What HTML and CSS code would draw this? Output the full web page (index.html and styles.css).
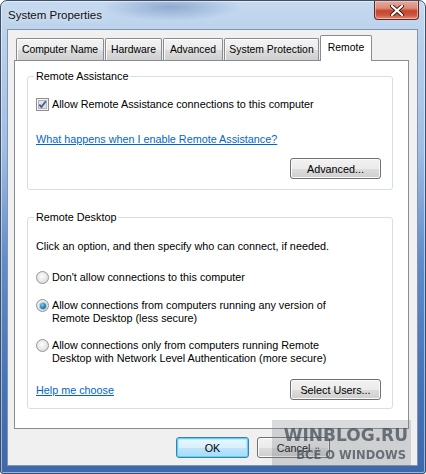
FILE: index.html
```html
<!DOCTYPE html>
<html lang="en">
<head>
  <meta charset="UTF-8" />
  <title>System Properties</title>
  <link rel="stylesheet" href="styles.css">
</head>
<body>
  <div class="window">
    <div class="titlebar">
      <span class="title">System Properties</span>
      <div class="close">
        <svg width="14" height="11" viewBox="0 0 14 11">
          <path d="M2 1 L12 10 M12 1 L2 10" stroke="#3a1a14" stroke-width="4" stroke-linecap="round" />
          <path d="M2 1 L12 10 M12 1 L2 10" stroke="#fff" stroke-width="2.2" stroke-linecap="round" />
        </svg>
      </div>
    </div>

    <div class="client">
      <div class="tabs">
        <div class="tab t1">Computer Name</div>
        <div class="tab t2">Hardware</div>
        <div class="tab t3">Advanced</div>
        <div class="tab t4">System Protection</div>
        <div class="tab t5 active">Remote</div>
      </div>

      <div class="panel">
        <fieldset class="group ra">
          <legend>Remote Assistance</legend>
          <div class="option single">
            <span class="checkbox">
              <svg width="13" height="13" viewBox="0 0 13 13">
                <rect x="0.5" y="0.5" width="12" height="12" fill="#f4f4f4" stroke="#8f8f8f" />
                <rect x="2.5" y="2.5" width="8" height="8" fill="#dfe3e8" stroke="#b4b8be" />
                <path d="M3.3 6.6 L5.4 9 L9.8 3.2" fill="none" stroke="#4b5b8f" stroke-width="1.8" />
              </svg>
            </span>
            <span>Allow Remote Assistance connections to this computer</span>
          </div>
          <a class="link ra-link" href="#">What happens when I enable Remote Assistance?</a>
          <div class="row end">
            <button class="btn wide">Advanced...</button>
          </div>
        </fieldset>

        <fieldset class="group rd">
          <legend>Remote Desktop</legend>
          <p class="intro">Click an option, and then specify who can connect, if needed.</p>
          <div class="option r1">
            <span class="radio"></span>
            <span>Don't allow connections to this computer</span>
          </div>
          <div class="option r2">
            <span class="radio on"></span>
            <span>Allow connections from computers running any version of<br>Remote Desktop (less secure)</span>
          </div>
          <div class="option r3">
            <span class="radio"></span>
            <span>Allow connections only from computers running Remote<br>Desktop with Network Level Authentication (more secure)</span>
          </div>
          <div class="row between">
            <a class="link" href="#">Help me choose</a>
            <button class="btn wide">Select Users...</button>
          </div>
        </fieldset>
      </div>

      <div class="actions">
        <button class="btn default">OK</button>
        <button class="btn">Cancel</button>
      </div>
    </div>

    <div class="watermark">
      <div class="wm-big">WINBLOG.RU</div>
      <div class="wm-small">ВСЁ О WINDOWS</div>
    </div>
  </div>
</body>
</html>
```

FILE: styles.css
```css
body {
  margin: 0;
  width: 426px;
  height: 474px;
  overflow: hidden;
  font-family: "Liberation Sans", Arial, sans-serif;
  font-size: 10.8px;
  color: #000;
}
.window {
  position: relative;
  width: 426px;
  height: 474px;
  box-sizing: border-box;
  display: flex;
  flex-direction: column;
  border-radius: 7px 7px 3px 3px;
  border: 1px solid #3c4e6a;
  background:
    radial-gradient(ellipse 70px 14px at 170px 6px, rgba(80,115,170,0.45), rgba(80,115,170,0)),
    linear-gradient(180deg, #c6daf0 0, #b9d0ea 40px, #9fbde3 150px, #5f8cca 260px, #4674b8 380px, #3d68ab 474px);
  box-shadow: inset 0 0 0 1px rgba(255,255,255,0.5);
}
.titlebar {
  height: 28px;
  display: flex;
  justify-content: space-between;
  align-items: flex-start;
}
.title {
  margin: 8px 0 0 7px;
  font-size: 11.5px;
  color: #111;
  text-shadow: 0 0 6px rgba(255,255,255,0.8);
}
.close {
  width: 45px;
  height: 19px;
  margin-right: 6px;
  box-sizing: border-box;
  border: 1px solid #5c2a22;
  border-top: none;
  border-radius: 0 0 4px 4px;
  display: flex;
  align-items: center;
  justify-content: center;
  background: linear-gradient(180deg, #e9a99b 0, #dc8a78 40%, #c5432e 55%, #cf5a3f 80%, #e0907b 100%);
  box-shadow: inset 0 0 0 1px rgba(255,210,200,0.6);
}
.client {
  margin: 0 7px 0 6px;
  height: 437px;
  box-sizing: border-box;
  border: 1px solid #8294b0;
  background: #f0f0f0;
  padding: 0 8px 0 6px;
}
.tabs {
  height: 30px;
  display: flex;
  align-items: flex-end;
  padding-left: 2px;
}
.tab {
  height: 22px;
  box-sizing: border-box;
  border: 1px solid #898c95;
  border-bottom: none;
  border-radius: 2px 2px 0 0;
  margin-right: 1px;
  display: flex;
  align-items: center;
  justify-content: center;
  white-space: nowrap;
  font-size: 10.4px;
  background: linear-gradient(180deg, #f3f3f3 0, #ebebeb 50%, #dddddd 51%, #cfcfcf 100%);
  box-shadow: inset 0 1px 0 #fff, inset 1px 0 0 #fafafa;
}
.t1 { width: 88px; }
.t2 { width: 57px; }
.t3 { width: 60px; }
.t4 { width: 95px; }
.t5 { width: 52px; }
.tab.active {
  height: 26px;
  margin-bottom: -1px;
  padding-bottom: 3px;
  background: #fff;
  box-shadow: none;
  position: relative;
  z-index: 1;
}
.panel {
  height: 369px;
  box-sizing: border-box;
  border: 1px solid #898c95;
  background: #fff;
  padding: 8px 15px 0 12px;
}
.group {
  margin: 0;
  padding: 0 11px 0 8px;
  border: 1px solid #d5dfe5;
  border-radius: 3px;
}
.group legend {
  padding: 0 2px;
  margin-left: -2px;
  line-height: 14px;
}
.ra { padding-bottom: 10px; }
.rd { margin-top: 20px; padding-bottom: 8px; }
.option {
  display: flex;
  align-items: flex-start;
  gap: 3px;
  line-height: 13px;
}
.option.single { margin-top: 14px; line-height: 14px; }
.checkbox { height: 13px; margin-top: 1px; }
.checkbox svg { display: block; }
.link {
  display: inline-block;
  color: #0066cc;
  text-decoration: underline;
  line-height: 14px;
}
.ra-link { margin-top: 21px; }
.row {
  display: flex;
  align-items: center;
}
.row.end { justify-content: flex-end; margin-top: 12px; }
.row.between { justify-content: space-between; margin-top: 14px; }
.intro {
  margin: 15px 0 0;
  line-height: 14px;
}
.r1 { margin-top: 18px; }
.r2 { margin-top: 15px; }
.r3 { margin-top: 14px; }
.radio {
  width: 13px;
  height: 13px;
  flex: none;
  box-sizing: border-box;
  border-radius: 50%;
  border: 1px solid #959595;
  background: radial-gradient(circle at 45% 40%, #fdfdfd 0, #e6e6e6 55%, #cfcfcf 100%);
  display: flex;
  align-items: center;
  justify-content: center;
}
.radio.on::after {
  content: "";
  width: 6px;
  height: 6px;
  border-radius: 50%;
  background: radial-gradient(circle at 40% 35%, #8fd3f0 0, #2b8ab8 45%, #14506f 100%);
  box-shadow: 0 0 0 1px rgba(110,170,200,0.5);
}
.btn {
  height: 21px;
  width: 73px;
  padding: 0;
  box-sizing: border-box;
  border: 1px solid #707070;
  border-radius: 3px;
  font-family: "Liberation Sans", Arial, sans-serif;
  font-size: 10.8px;
  color: #000;
  background: linear-gradient(180deg, #f2f2f2 0, #ebebeb 50%, #dddddd 51%, #cfcfcf 100%);
  box-shadow: inset 0 0 0 1px #fbfbfb;
}
.btn.wide { width: 91px; }
.btn.default {
  border-color: #3c7fb1;
  background: linear-gradient(180deg, #eaf6fd 0, #d9f0fc 50%, #bee6fd 51%, #a7d9f5 100%);
  box-shadow: inset 0 0 0 1px #5fd3f5, inset 0 0 0 2px rgba(160,230,250,0.6);
}
.actions {
  margin-top: 8px;
  display: flex;
  justify-content: flex-end;
  gap: 8px;
  padding-right: 79px;
}
.watermark {
  position: absolute;
  left: 271px;
  top: 419px;
  width: 139px;
  height: 46px;
  background: rgba(120,125,130,0.28);
  font-family: "DejaVu Sans", sans-serif;
  font-weight: bold;
  color: rgba(70,78,88,0.75);
  text-align: right;
  filter: blur(0.7px);
}
.wm-big {
  font-size: 17px;
  line-height: 18px;
  margin-top: 6px;
  padding-right: 3px;
}
.wm-small {
  font-size: 11.5px;
  line-height: 14px;
  margin-top: 4px;
  padding-right: 5px;
}
```
